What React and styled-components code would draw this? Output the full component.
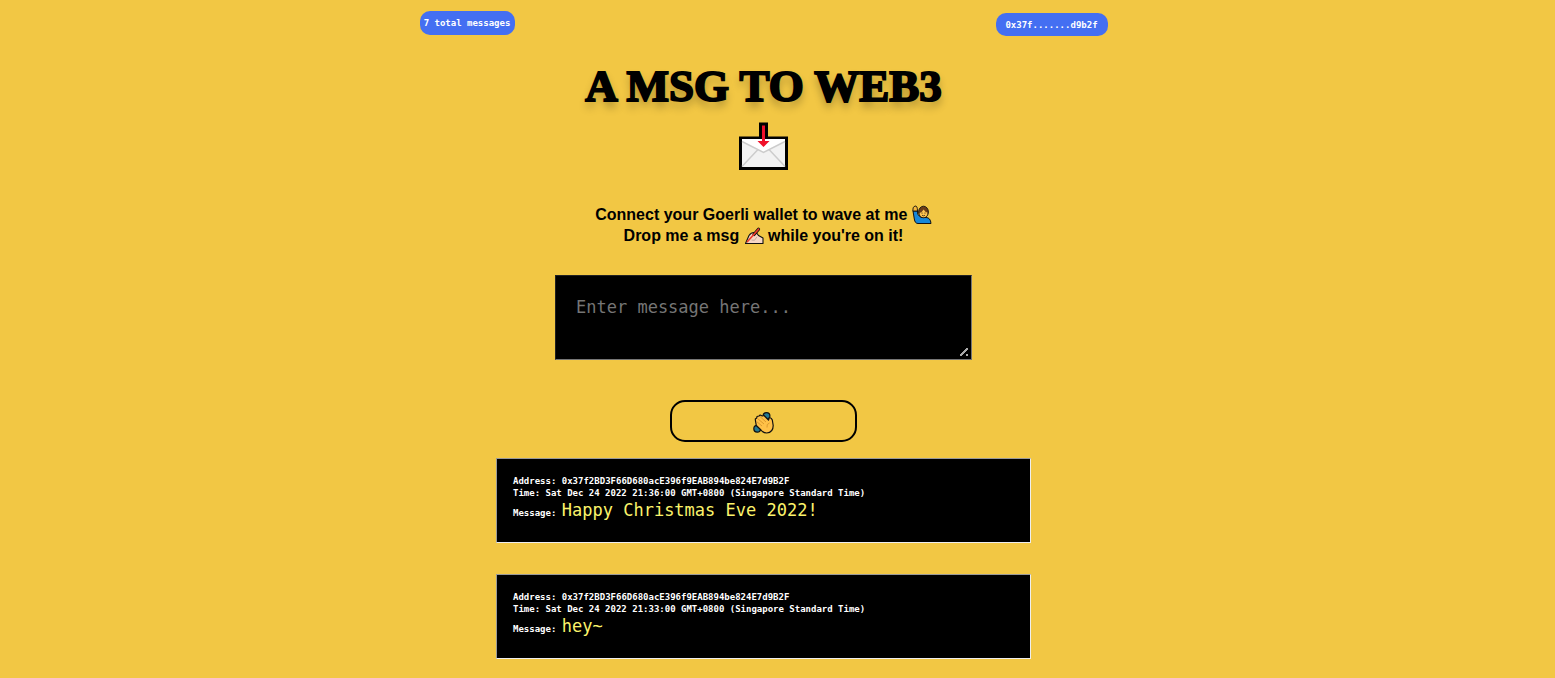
import React from "react";
import styled, { createGlobalStyle } from "styled-components";

const mono = '"DejaVu Sans Mono", "Liberation Mono", monospace';

const GlobalStyle = createGlobalStyle`
  *, *::before, *::after { box-sizing: border-box; }
  body {
    margin: 0;
    background: #f2c744;
    color: #000;
    font-family: "Liberation Sans", Arial, sans-serif;
  }
`;

const Page = styled.div`
  display: flex;
  flex-direction: column;
  align-items: center;
  padding: 11px 28px 20px 0;
`;

const TopBar = styled.header`
  display: flex;
  justify-content: space-between;
  width: 100%;
  max-width: 688px;
`;

const Pill = styled.span`
  display: flex;
  align-items: center;
  justify-content: center;
  width: ${(p) => (p.$wide ? 112 : 95)}px;
  height: 24px;
  border-radius: 10px;
  background: #446ff2;
  color: #fff;
  font: bold 9px/12px ${mono};
  white-space: nowrap;
`;

const AccountButton = styled(Pill)`
  height: 23px;
  margin-top: 2px;
  padding: 0;
  border: 0;
`;

const Title = styled.h1`
  margin: 22px 0 8px;
  font: bold 45px/56px "Liberation Serif", "Times New Roman", serif;
  -webkit-text-stroke: 2px #000;
  text-shadow: 0 6px 8px rgba(0, 0, 0, 0.3);
  text-align: center;
`;

const Intro = styled.p`
  margin: 34px 0 0;
  font-size: 16px;
  font-weight: bold;
  line-height: 21px;
  text-align: center;
`;

const Emoji = styled.svg`
  width: 20px;
  height: 20px;
  vertical-align: -5px;
`;

const MailIcon = styled.svg`
  width: 49px;
  height: 48px;
`;

const Form = styled.form`
  display: flex;
  flex-direction: column;
  align-items: center;
  width: 100%;
  margin-top: 29px;
`;

const MessageInput = styled.textarea`
  display: block;
  width: 100%;
  max-width: 417px;
  height: 85px;
  padding: 20px;
  border: 1px inset #767676;
  border-radius: 0;
  background: #000;
  color: #fff;
  font: 17px/22px ${mono};
  &::placeholder { color: #757575; }
  &::-webkit-resizer {
    background:
      linear-gradient(135deg, transparent 43%, #aaa 43%, #aaa 60%, transparent 60%) 4px 4px / 8px 8px no-repeat,
      linear-gradient(#aaa, #aaa) 10px 10px / 2px 2px no-repeat;
  }
`;

const WaveButton = styled.button`
  display: flex;
  align-items: center;
  justify-content: center;
  width: 187px;
  height: 42px;
  margin-top: 40px;
  padding: 3px 0 0;
  border: 2px solid #000;
  border-radius: 15px;
  background: transparent;
`;

const WaveIcon = styled.svg`
  width: 21px;
  height: 22px;
`;

const MessageList = styled.ul`
  display: flex;
  flex-direction: column;
  gap: 31px;
  width: 100%;
  max-width: 535px;
  margin: 16px 0 0;
  padding: 0;
  list-style: none;
`;

const MessageCard = styled.li`
  min-height: 85px;
  padding: 16px;
  border: 1px inset #eee;
  background: #000;
  color: #fff;
  font: bold 9px/12px ${mono};
`;

const Line = styled.div``;

const MessageText = styled.span`
  color: #fbf36b;
  font-size: 17px;
  font-weight: normal;
  line-height: 22px;
`;

const messages = [
  {
    address: "0x37f2BD3F66D680acE396f9EAB894be824E7d9B2F",
    time: "Sat Dec 24 2022 21:36:00 GMT+0800 (Singapore Standard Time)",
    text: "Happy Christmas Eve 2022!",
  },
  {
    address: "0x37f2BD3F66D680acE396f9EAB894be824E7d9B2F",
    time: "Sat Dec 24 2022 21:33:00 GMT+0800 (Singapore Standard Time)",
    text: "hey~",
  },
];

const Mail = () => (
  <MailIcon viewBox="0 0 49 48" aria-hidden="true">
    <path d="M20 0.500h9v14h20v33.500H0V14.500h20z" fill="#000" />
    <path d="M3 17h43v28H3z" fill="#f2f2f2" />
    <path d="M3 17h43v3L24.500 30 3 20z" fill="#fff" />
    <path d="M3 19.500 24.500 30.500l21.500-11M3 44.500 18.500 28M46 44.500 30.500 28" fill="none" stroke="#ccc" strokeWidth="1.500" />
    <path d="M23 3.500h3V19h4.500l-6 6-6-6H23z" fill="#f0112b" />
  </MailIcon>
);

const RaisedHand = () => (
  <Emoji viewBox="0 0 20 20" aria-hidden="true">
    <path d="M1 6h4.500l.3 3.500L9 12.500h5q4.500 0 5 6H6Q3 18.500 2.300 14z" fill="#1687d9" stroke="#111" strokeWidth="1" />
    <path d="M.8 6Q.5 1.500 3 1t2.500 5z" fill="#f5b63c" stroke="#111" strokeWidth=".9" />
    <ellipse cx="11.500" cy="7" rx="4.900" ry="5.800" fill="#6b3d18" stroke="#111" strokeWidth=".9" />
    <path d="M7.600 8q2.500-.8 4-3.500 1.500 2.500 3.800 3 0 4.800-3.800 4.800T7.600 8z" fill="#ffc44f" />
    <path d="M10 7.500v1.200M13 7.500v1.200M10 10.300q1.500 1 3 0" fill="none" stroke="#111" strokeWidth=".7" />
  </Emoji>
);

const WritingHand = () => (
  <Emoji viewBox="0 0 20 20" aria-hidden="true">
    <path d="M1.500 17.500 5 9.500q2-3 5-3l3 1 1.500 2L19 12v5.500z" fill="#f7d7c4" stroke="#111" strokeWidth="1.100" strokeLinejoin="round" />
    <path d="M10 8.500 14.500 3.200" stroke="#111" strokeWidth="3.200" strokeLinecap="round" />
    <path d="M3.500 15.500 14.500 3.200" stroke="#ee3b2b" strokeWidth="1.700" strokeLinecap="round" />
    <path d="m7.500 14 3 .3 2.500-3.500" fill="none" stroke="#b39a8c" strokeWidth=".7" />
  </Emoji>
);

const Wave = () => (
  <WaveIcon viewBox="0 0 21 22" aria-hidden="true">
    <circle cx="13.500" cy="4" r="3.400" fill="#247a92" stroke="#111" strokeWidth="1.200" />
    <circle cx="4.200" cy="16.800" r="3.400" fill="#247a92" stroke="#111" strokeWidth="1.200" />
    <path d="M2.500 9 2.300 7l1.400-1 .3-1.500 2-.5 1.200-1L9.300 4 11 3.500l4.500 4.500.8-2.500q2.500.3 3 2.500l.9 5.500q0 7-6.500 7.500-3.700 0-5.700-3l-4.700-4.500z" fill="#ffc148" stroke="#111" strokeWidth="1.200" strokeLinejoin="round" />
    <path d="m4.500 6.500 6.500 5.500M7 4.500l6 5.500M3.500 9.500 9 14M16.500 11q-3.200.8-2.500 4.500" fill="none" stroke="#d18f28" strokeWidth=".8" />
  </WaveIcon>
);

export default function App() {
  return (
    <>
      <GlobalStyle />
      <Page>
        <TopBar>
          <Pill>7 total messages</Pill>
          <AccountButton as="button" type="button" $wide>
            0x37f.......d9b2f
          </AccountButton>
        </TopBar>
        <Title>A MSG TO WEB3</Title>
        <Mail />
        <Intro>
          Connect your Goerli wallet to wave at me <RaisedHand />
          <br />
          Drop me a msg <WritingHand /> while you're on it!
        </Intro>
        <Form onSubmit={(e) => e.preventDefault()}>
          <MessageInput aria-label="Message" placeholder="Enter message here..." />
          <WaveButton type="submit" aria-label="Wave">
            <Wave />
          </WaveButton>
        </Form>
        <MessageList>
          {messages.map((m) => (
            <MessageCard key={m.time}>
              <Line>Address: {m.address}</Line>
              <Line>Time: {m.time}</Line>
              <Line>
                Message: <MessageText>{m.text}</MessageText>
              </Line>
            </MessageCard>
          ))}
        </MessageList>
      </Page>
    </>
  );
}
